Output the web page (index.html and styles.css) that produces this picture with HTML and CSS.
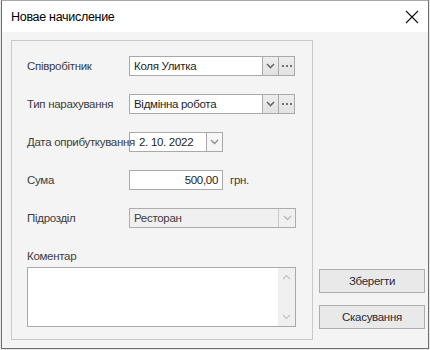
FILE: index.html
```html
<!DOCTYPE html>
<html lang="uk">
<head>
	<meta charset="UTF-8">
	<title>Новае начисление</title>
	<link rel="stylesheet" href="styles.css">
</head>
<body>
	<div class="window">
		<div class="titlebar">
			<span class="title">Новае начисление</span>
			<svg class="close" width="14" height="14" viewBox="0 0 14 14">
				<path d="M1 1L13 13M13 1L1 13" stroke="#111" stroke-width="1.1" fill="none"/>
			</svg>
		</div>
		<div class="content">
			<div class="group">
				<div class="row">
					<span class="label">Співробітник</span>
					<div class="combo">
						<div class="input">Коля Улитка</div>
						<div class="btn drop"><svg width="9" height="6" viewBox="0 0 9 6"><path d="M1 1L4.5 4.5L8 1" stroke="#6a6a6a" stroke-width="1.6" fill="none"/></svg></div>
						<div class="btn more"><i></i><i></i><i></i></div>
					</div>
				</div>
				<div class="row">
					<span class="label">Тип нарахування</span>
					<div class="combo">
						<div class="input">Відмінна робота</div>
						<div class="btn drop"><svg width="9" height="6" viewBox="0 0 9 6"><path d="M1 1L4.5 4.5L8 1" stroke="#6a6a6a" stroke-width="1.6" fill="none"/></svg></div>
						<div class="btn more"><i></i><i></i><i></i></div>
					</div>
				</div>
				<div class="row">
					<span class="label over">Дата оприбуткування</span>
					<div class="date">
						<div class="date-text">2. 10. 2022</div>
						<div class="btn drop"><svg width="9" height="6" viewBox="0 0 9 6"><path d="M1 1L4.5 4.5L8 1" stroke="#8a8a8a" stroke-width="1.3" fill="none"/></svg></div>
					</div>
				</div>
				<div class="row">
					<span class="label">Сума</span>
					<div class="input sum">500,00</div>
					<span class="unit">грн.</span>
				</div>
				<div class="row">
					<span class="label">Підрозділ</span>
					<div class="select disabled">
						<div class="select-text">Ресторан</div>
						<div class="drop-off"><svg width="9" height="6" viewBox="0 0 9 6"><path d="M1 1L4.5 4.5L8 1" stroke="#b8b8b8" stroke-width="1.3" fill="none"/></svg></div>
					</div>
				</div>
				<div class="comment-label">Коментар</div>
				<div class="memo">
					<div class="memo-text"></div>
					<div class="scroll">
						<svg width="9" height="6" viewBox="0 0 9 6"><path d="M1 5L4.5 1.5L8 5" stroke="#c2c2c2" stroke-width="1.2" fill="none"/></svg>
						<svg width="9" height="6" viewBox="0 0 9 6"><path d="M1 1L4.5 4.5L8 1" stroke="#c2c2c2" stroke-width="1.2" fill="none"/></svg>
					</div>
				</div>
			</div>
			<div class="actions">
				<div class="button">Зберегти</div>
				<div class="button">Скасування</div>
			</div>
		</div>
	</div>
</body>
</html>
```

FILE: styles.css
```css
html,body{
	margin: 0;padding: 0;
}
body{
	background: #e8e8e8;
	font-family: "Liberation Sans", "DejaVu Sans", sans-serif;
	font-size: 11.5px;
	letter-spacing: -0.3px;
	color: #333;
}
.window{
	width: 428px;
	height: 349px;
	margin-left: 1px;
	box-sizing: border-box;
	border: 1px solid #6e6e6e;
	border-top-color: #a8a8a8;
	background: #f4f4f4;
	display: flex;
	flex-direction: column;
}
.titlebar{
	height: 31px;
	background: #fff;
	display: flex;
	align-items: center;
	justify-content: space-between;
	padding: 0 9px 0 9px;
	flex-shrink: 0;
}
.title{
	font-size: 12.5px;
	letter-spacing: -0.3px;
	color: #000;
}
.close{
	display: block;
	margin-top: 1px;
}
.content{
	flex: 1;
	display: flex;
	padding: 8px 0 0 9px;
}
.group{
	width: 302px;
	height: 300px;
	box-sizing: border-box;
	border: 1px solid #c9c9c9;
	padding: 15px 0 0 15px;
}
.row{
	display: flex;
	align-items: center;
	height: 20px;
	margin-bottom: 18px;
}
.label{
	width: 102px;
	flex-shrink: 0;
	color: #3c3c40;
	white-space: nowrap;
}
.over{
	position: relative;
	z-index: 1;
}
.combo{
	display: flex;
	height: 20px;
}
.input{
	box-sizing: border-box;
	width: 134px;
	height: 20px;
	border: 1px solid #a9a9a9;
	background: #fff;
	padding: 0 4px;
	line-height: 18px;
	color: #1e1e24;
	white-space: nowrap;
	overflow: hidden;
}
.btn{
	box-sizing: border-box;
	width: 17px;
	height: 20px;
	border: 1px solid #a9a9a9;
	background: linear-gradient(#ededed, #e2e2e2);
	margin-left: -1px;
	display: flex;
	align-items: center;
	justify-content: center;
	gap: 2px;
}
.btn svg{
	display: block;
}
.more i{
	width: 2px;
	height: 2px;
	background: #707070;
}
.date{
	box-sizing: border-box;
	width: 94px;
	height: 20px;
	border: 1px solid #a9a9a9;
	background: #fff;
	display: flex;
}
.date-text{
	flex: 1;
	padding-left: 9px;
	line-height: 18px;
	color: #1e1e24;
	white-space: nowrap;
	overflow: hidden;
}
.date .btn{
	height: 18px;
	width: 16px;
	border-width: 0 0 0 1px;
	background: #f6f6f6;
	margin: 0;
}
.sum{
	width: 94px;
	text-align: right;
}
.unit{
	margin-left: 7px;
	color: #3c3c40;
}
.select{
	box-sizing: border-box;
	width: 167px;
	height: 20px;
	border: 1px solid #adadad;
	display: flex;
}
.disabled{
	background: #f0f0f0;
}
.select-text{
	flex: 1;
	padding-left: 4px;
	line-height: 18px;
	color: #3c3c40;
}
.drop-off{
	width: 16px;
	border-left: 1px solid #c8c8c8;
	display: flex;
	align-items: center;
	justify-content: center;
}
.comment-label{
	margin-top: 21px;
	line-height: 14px;
	color: #3c3c40;
}
.memo{
	box-sizing: border-box;
	width: 269px;
	height: 60px;
	margin-top: 4px;
	border: 1px solid #a9a9a9;
	background: #fff;
	display: flex;
}
.memo-text{
	flex: 1;
}
.scroll{
	width: 17px;
	background: #f0f0f0;
	display: flex;
	flex-direction: column;
	justify-content: space-between;
	align-items: center;
	padding: 6px 0 6px;
}
.scroll svg{
	display: block;
}
.actions{
	width: 106px;
	margin-left: 6px;
	display: flex;
	flex-direction: column;
	justify-content: flex-end;
	gap: 12px;
	padding-bottom: 19px;
}
.button{
	box-sizing: border-box;
	height: 24px;
	border: 1px solid #adadad;
	background: #e9e9e9;
	text-align: center;
	line-height: 22px;
	color: #2a2a34;
}
```
